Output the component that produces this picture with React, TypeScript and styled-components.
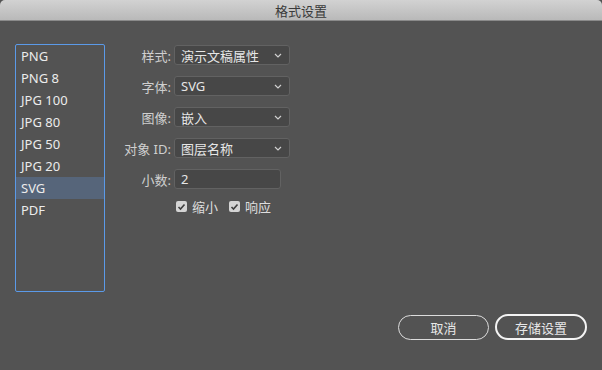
import React from "react";
import styled, { createGlobalStyle } from "styled-components";

const GlobalStyle = createGlobalStyle`
  html, body {
    margin: 0;
    padding: 0;
    background: #535353;
  }
  body {
    font-family: "Noto Sans", "Noto Sans CJK SC", sans-serif;
  }
`;

const Window = styled.div`
  width: 602px;
  height: 370px;
  background: #535353;
  border-radius: 5px 5px 0 0;
  overflow: hidden;
  display: flex;
  flex-direction: column;
`;

const TitleBar = styled.div`
  height: 21px;
  flex: none;
  background: linear-gradient(#d2d2d2, #b9b9b9);
  border-bottom: 1px solid #8a8a8a;
  box-sizing: border-box;
  display: flex;
  align-items: center;
  justify-content: center;
  font-size: 13px;
  color: #3a3a3a;
`;

const Body = styled.div`
  flex: 1;
  padding: 23px 15px 0 15px;
  display: flex;
  flex-direction: column;
`;

const Main = styled.div`
  display: flex;
  align-items: flex-start;
`;

const FormatList = styled.div`
  width: 90px;
  height: 248px;
  box-sizing: border-box;
  border: 1px solid #5b9ae8;
  border-radius: 2px;
  display: flex;
  flex-direction: column;
`;

const Item = styled.div<{ $active?: boolean }>`
  height: 22px;
  line-height: 22px;
  padding-left: 5px;
  font-size: 13px;
  color: #ececec;
  background: ${(p) => (p.$active ? "#56657a" : "transparent")};
`;

const Form = styled.div`
  display: grid;
  grid-template-columns: 66px auto;
  column-gap: 3px;
  row-gap: 11px;
  align-items: center;
  align-content: start;
  margin-top: 1px;
`;

const Label = styled.div`
  text-align: right;
  font-size: 13px;
  color: #cfcfcf;
  white-space: nowrap;
`;

const Select = styled.div`
  width: 116px;
  height: 20px;
  box-sizing: border-box;
  background: #474747;
  border: 1px solid #626262;
  border-radius: 3px;
  display: flex;
  align-items: center;
  justify-content: space-between;
  padding: 0 7px 0 6px;
  font-size: 13px;
  color: #e6e6e6;
`;

const TextField = styled.div<{ $w: number }>`
  width: ${(p) => p.$w}px;
  height: 20px;
  box-sizing: border-box;
  background: #474747;
  border: 1px solid #626262;
  border-radius: 3px;
  padding-left: 6px;
  display: flex;
  align-items: center;
  font-size: 13px;
  color: #e6e6e6;
`;

const CheckRow = styled.div`
  grid-column: 2;
  display: flex;
  align-items: center;
  gap: 11px;
  padding-left: 2px;
  margin-top: -3px;
`;

const Check = styled.label`
  display: flex;
  align-items: center;
  gap: 5px;
  font-size: 13px;
  color: #dedede;
`;

const Box = styled.span`
  width: 11px;
  height: 11px;
  border-radius: 2px;
  background: #d4d4d4;
  display: flex;
  align-items: center;
  justify-content: center;
`;

const Footer = styled.div`
  display: flex;
  justify-content: flex-end;
  align-items: center;
  gap: 6px;
  margin-top: 22px;
`;

const Button = styled.div<{ $primary?: boolean }>`
  width: ${(p) => (p.$primary ? 92 : 91)}px;
  height: ${(p) => (p.$primary ? 26 : 25)}px;
  box-sizing: border-box;
  border: ${(p) => (p.$primary ? "2px solid #f4f4f4" : "1px solid #dcdcdc")};
  border-radius: 13px;
  display: flex;
  align-items: center;
  justify-content: center;
  font-size: 13px;
  color: #e8e8e8;
`;

const Chevron = () => (
  <svg width="8" height="5" viewBox="0 0 8 5">
    <polyline points="1,1 4,4 7,1" fill="none" stroke="#d0d0d0" strokeWidth="1.2" />
  </svg>
);

const Tick = () => (
  <svg width="9" height="8" viewBox="0 0 9 8">
    <polyline points="1.5,4 3.5,6 7.5,1.5" fill="none" stroke="#3e3e3e" strokeWidth="1.6" />
  </svg>
);

const formats = ["PNG", "PNG 8", "JPG 100", "JPG 80", "JPG 50", "JPG 20", "SVG", "PDF"];

export default function App() {
  return (
    <>
      <GlobalStyle />
      <Window>
        <TitleBar>格式设置</TitleBar>
        <Body>
          <Main>
            <FormatList>
              {formats.map((f) => (
                <Item key={f} $active={f === "SVG"}>
                  {f}
                </Item>
              ))}
            </FormatList>
            <Form>
              <Label>样式:</Label>
              <Select>
                演示文稿属性
                <Chevron />
              </Select>
              <Label>字体:</Label>
              <Select>
                SVG
                <Chevron />
              </Select>
              <Label>图像:</Label>
              <Select>
                嵌入
                <Chevron />
              </Select>
              <Label>对象 ID:</Label>
              <Select>
                图层名称
                <Chevron />
              </Select>
              <Label>小数:</Label>
              <TextField $w={107}>2</TextField>
              <CheckRow>
                <Check>
                  <Box>
                    <Tick />
                  </Box>
                  缩小
                </Check>
                <Check>
                  <Box>
                    <Tick />
                  </Box>
                  响应
                </Check>
              </CheckRow>
            </Form>
          </Main>
          <Footer>
            <Button>取消</Button>
            <Button $primary>存储设置</Button>
          </Footer>
        </Body>
      </Window>
    </>
  );
}
